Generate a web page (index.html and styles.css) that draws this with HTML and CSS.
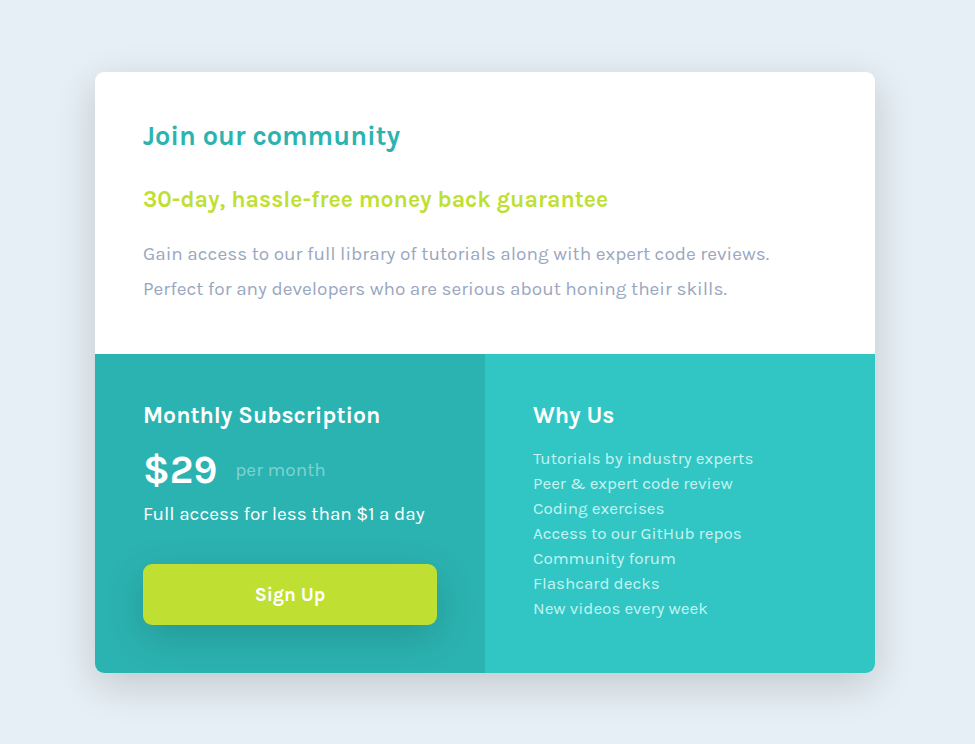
FILE: index.html
```html
<!DOCTYPE html>
<html lang="en">
<head>
<meta charset="utf-8">
<meta name="viewport" content="width=device-width, initial-scale=1">
<title>Join our community</title>
<link rel="stylesheet" href="styles.css">
</head>
<body>
<main class="card">
  <section class="intro">
    <h1>Join our community</h1>
    <h2 class="guarantee">30-day, hassle-free money back guarantee</h2>
    <p>Gain access to our full library of tutorials along with expert code reviews. Perfect for any developers who are serious about honing their skills.</p>
  </section>
  <div class="columns">
    <section class="plan">
      <h2>Monthly Subscription</h2>
      <p class="price"><strong>$29</strong><span>per month</span></p>
      <p class="note">Full access for less than $1 a day</p>
      <button type="button">Sign Up</button>
    </section>
    <section class="why">
      <h2>Why Us</h2>
      <ul>
        <li>Tutorials by industry experts</li>
        <li>Peer &amp; expert code review</li>
        <li>Coding exercises</li>
        <li>Access to our GitHub repos</li>
        <li>Community forum</li>
        <li>Flashcard decks</li>
        <li>New videos every week</li>
      </ul>
    </section>
  </div>
</main>
</body>
</html>
```
FILE: styles.css
```css
* { box-sizing: border-box; margin: 0; padding: 0; }
body {
  min-height: 100vh;
  display: grid;
  place-items: center;
  padding: 41px 48px 40px 43px;
  background: #e6eff5;
  font-family: Karla, Roboto, "Liberation Sans", sans-serif;
  font-size: 19px;
}
.card {
  width: 100%;
  max-width: 780px;
  border-radius: 9px;
  overflow: hidden;
  background: #fff;
  box-shadow: 0 12px 40px rgba(0, 0, 0, 0.16);
}
.intro { padding: 48px 48px 47px; }
h1 { font-size: 27px; line-height: 32px; font-weight: 700; color: #2bb3b1; }
h2 { font-size: 23px; line-height: 27px; font-weight: 700; }
.guarantee { margin: 34px 0 24px; color: #bfdf32; }
.intro p { line-height: 35px; color: #9aa7bf; }
.columns { display: grid; grid-template-columns: 1fr 1fr; color: #fff; }
.plan, .why { padding: 48px; }
.plan { background: #2bb3b1; }
.why { background: #31c6c4; }
.price { display: flex; align-items: center; gap: 18px; margin: 16px 0 5px; line-height: 50px; }
.price strong { font-size: 39px; }
.price span { color: #80d2d0; }
.note { line-height: 28px; }
button {
  width: 100%;
  margin-top: 36px;
  padding: 17px 16px 15px;
  border: 0;
  border-radius: 9px;
  background: #bfdf32;
  color: #fff;
  font: 700 19px/29px Karla, Roboto, "Liberation Sans", sans-serif;
  box-shadow: 0 12px 40px rgba(0, 0, 0, 0.16);
  cursor: pointer;
}
ul { margin-top: 17px; list-style: none; font-size: 17px; line-height: 25px; color: #c4f3f1; }
```
